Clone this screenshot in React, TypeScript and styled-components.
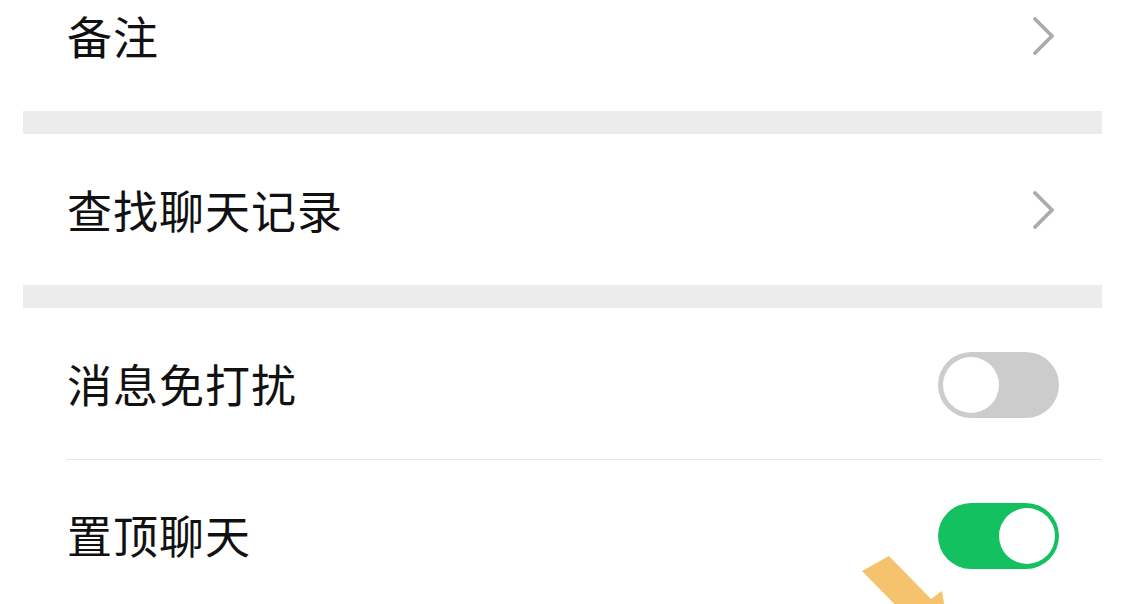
import React, { useState } from "react";
import styled, { createGlobalStyle } from "styled-components";

const GlobalStyle = createGlobalStyle`
  html, body {
    margin: 0;
    padding: 0;
    background: #ffffff;
    overflow: hidden;
  }
  body {
    width: 1132px;
    height: 604px;
    font-family: "Noto Sans CJK SC", "Noto Sans", sans-serif;
  }
`;

const Chevron = () => (
  <ChevronIcon width="22" height="38" viewBox="0 0 22 38">
    <polyline
      points="2,2 19,19 2,36"
      fill="none"
      stroke="#ababab"
      strokeWidth="3.8"
      strokeLinecap="round"
      strokeLinejoin="round"
    />
  </ChevronIcon>
);

const App: React.FC = () => {
  const [mute, setMute] = useState(false);
  const [pinned, setPinned] = useState(true);

  return (
    <Page>
      <GlobalStyle />
      <List>
        <Row>
          <Label>备注</Label>
          <Chevron />
        </Row>
        <Gap />
        <Row>
          <Label>查找聊天记录</Label>
          <Chevron />
        </Row>
        <Gap />
        <Row divided>
          <Label>消息免打扰</Label>
          <Switch on={mute} onClick={() => setMute(!mute)}>
            <Knob on={mute} />
          </Switch>
        </Row>
        <Row>
          <Label>置顶聊天</Label>
          <Switch on={pinned} onClick={() => setPinned(!pinned)}>
            <Knob on={pinned} />
          </Switch>
        </Row>
      </List>
      {/* the yellow hint arrow drawn on top of the screenshot */}
      <Arrow width="1132" height="604" viewBox="0 0 1132 604">
        <polygon
          points="862,571 889,556 931,599 942,591 950,640 900,640 914,624"
          fill="#f5c36e"
        />
      </Arrow>
    </Page>
  );
};

export default App;

const Page = styled.div`
  position: relative;
  width: 1132px;
  height: 604px;
  overflow: hidden;
  background: #ffffff;
`;

const List = styled.div`
  display: flex;
  flex-direction: column;
  margin: -40px 30px 0 23px;
`;

interface DivProps {
  readonly divided?: boolean;
}

const Row = styled.div<DivProps>`
  display: flex;
  align-items: center;
  justify-content: space-between;
  height: 151px;
  padding: 0 43px 0 44px;
  box-sizing: border-box;
  position: relative;

  &::after {
    content: "";
    display: ${({ divided }) => (divided ? "block" : "none")};
    position: absolute;
    left: 43px;
    right: 0;
    bottom: -1px;
    height: 1px;
    background: #e6e6e6;
  }
`;

const Gap = styled.div`
  height: 23px;
  background: #ececec;
`;

const Label = styled.span`
  font-size: 45px;
  line-height: 1;
  color: #111111;
  padding-top: 0;
  letter-spacing: 1px;
`;

const ChevronIcon = styled.svg`
  margin-right: 4px;
`;

interface SwitchProps {
  readonly on: boolean;
}

const Switch = styled.div<SwitchProps>`
  display: flex;
  align-items: center;
  justify-content: ${({ on }) => (on ? "flex-end" : "flex-start")};
  width: 121px;
  height: 66px;
  padding: 0 4px 0 5px;
  box-sizing: border-box;
  border-radius: 33px;
  background: ${({ on }) => (on ? "#14c160" : "#cccccc")};
  cursor: pointer;
  margin-top: 2px;
`;

const Knob = styled.div<SwitchProps>`
  width: 56px;
  height: 56px;
  border-radius: 50%;
  background: #ffffff;
`;

const Arrow = styled.svg`
  position: absolute;
  left: 0;
  top: 0;
  pointer-events: none;
`;
